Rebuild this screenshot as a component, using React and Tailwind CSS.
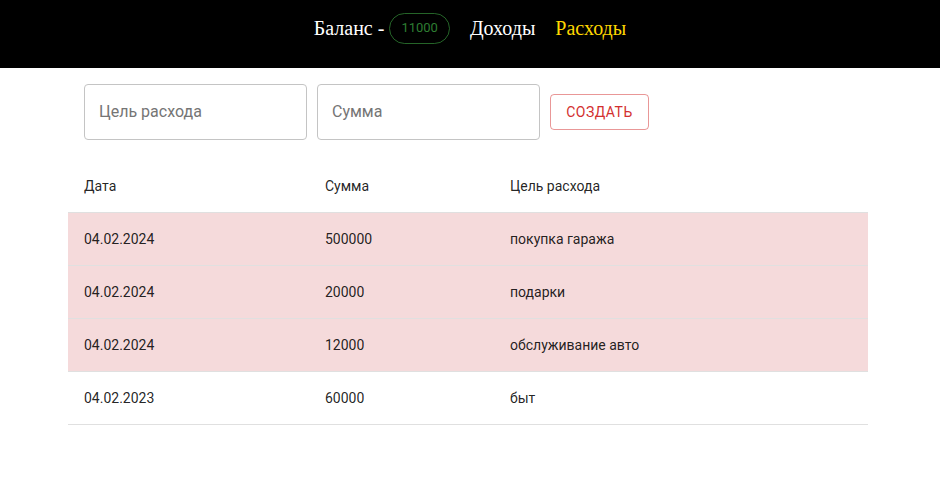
import React from "react";

const rows = [
  { d: "04.02.2024", s: "500000", g: "покупка гаража", pink: true },
  { d: "04.02.2024", s: "20000", g: "подарки", pink: true },
  { d: "04.02.2024", s: "12000", g: "обслуживание авто", pink: true },
  { d: "04.02.2023", s: "60000", g: "быт", pink: false },
];

export default function App() {
  return (
    <div className="min-h-[480px] bg-white" style={{ fontFamily: "Roboto, 'Liberation Sans', Arial, sans-serif" }}>
      <header className="h-[68px] bg-black flex items-center justify-center gap-5 pb-[12px] font-['Liberation_Serif',serif] text-[20px]">
        <div className="flex items-center gap-[5px] text-white">
          <span>Баланс -</span>
          <span className="h-[31px] px-[11px] rounded-full border border-[rgba(46,125,50,0.8)] text-[#2e7d32] text-[13px] flex items-center font-['Roboto',sans-serif]">
            11000
          </span>
        </div>
        <span className="text-white">Доходы</span>
        <span className="text-[#ffd700]">Расходы</span>
      </header>
      <main className="w-[800px] ml-[68px]">
        <div className="flex items-center gap-[10px] px-4 pt-4">
          <div className="w-[223px] h-[56px] border border-[#c4c4c4] rounded flex items-center px-[14px] text-[16px] text-[#757575]">
            Цель расхода
          </div>
          <div className="w-[223px] h-[56px] border border-[#c4c4c4] rounded flex items-center px-[14px] text-[16px] text-[#757575]">
            Сумма
          </div>
          <button className="h-[36px] w-[99px] border border-[rgba(211,47,47,0.5)] rounded text-[#d32f2f] text-[14px] font-normal uppercase tracking-[0.5px]">
            Создать
          </button>
        </div>
        <table className="w-full mt-5 text-[14px] text-[rgba(0,0,0,0.87)] border-collapse">
          <thead>
            <tr className="border-b border-[#e0e0e0]">
              <th className="w-[241px] text-left font-normal p-4 leading-[20px]">Дата</th>
              <th className="w-[185px] text-left font-normal p-4 leading-[20px]">Сумма</th>
              <th className="text-left font-normal p-4 leading-[20px]">Цель расхода</th>
            </tr>
          </thead>
          <tbody>
            {rows.map((r, i) => (
              <tr key={i} className={(r.pink ? "bg-[#f5dadb] " : "") + "border-b border-[#e0e0e0]"}>
                <td className="p-4 leading-[20px]">{r.d}</td>
                <td className="p-4 leading-[20px]">{r.s}</td>
                <td className="p-4 leading-[20px]">{r.g}</td>
              </tr>
            ))}
          </tbody>
        </table>
      </main>
    </div>
  );
}
